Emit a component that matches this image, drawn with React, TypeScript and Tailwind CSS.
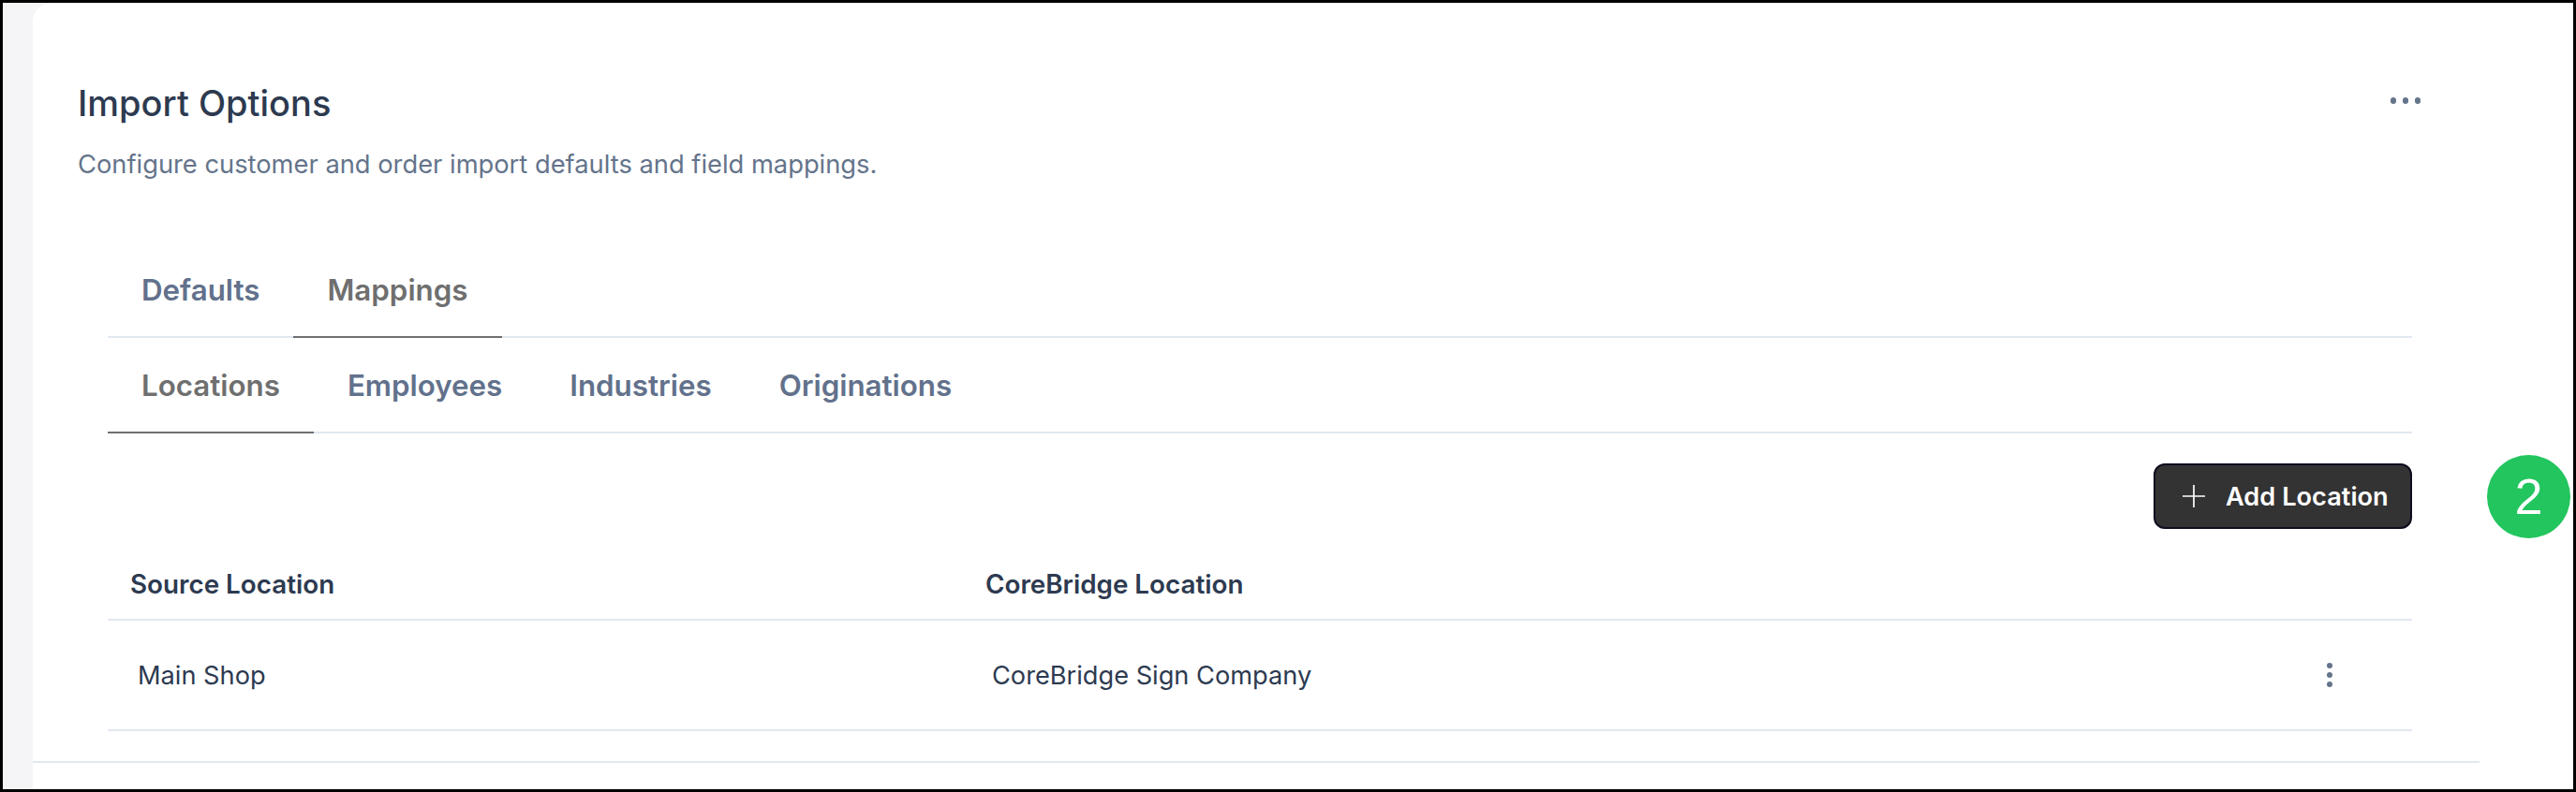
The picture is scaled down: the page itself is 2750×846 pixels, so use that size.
import React from "react";

function Tab({ label, active }: { label: string; active?: boolean }) {
  return (
    <div
      className={
        "h-[102px] -mb-[2px] px-9 pt-[2px] flex items-center text-[31.3px] font-semibold border-b-2 " +
        (active ? "text-[#6f6f6f] border-[#6f6f6f]" : "text-[#62718c] border-transparent")
      }
    >
      {label}
    </div>
  );
}

function Dots({ vertical }: { vertical?: boolean }) {
  return (
    <div className={vertical ? "flex flex-col gap-[3.5px]" : "flex flex-row gap-[6.5px]"}>
      <span className="w-[6.5px] h-[6.5px] rounded-full bg-[#64748b]" />
      <span className="w-[6.5px] h-[6.5px] rounded-full bg-[#64748b]" />
      <span className="w-[6.5px] h-[6.5px] rounded-full bg-[#64748b]" />
    </div>
  );
}

export default function App() {
  return (
    <div className="w-[2750px] h-[846px] border-[3px] border-black bg-[#f5f5f7] flex font-['Inter',sans-serif] overflow-hidden">
      <div className="w-[32px] shrink-0" />
      <div className="w-[2612px] shrink-0 h-full rounded-tl-[20px] rounded-tr-[3px] bg-white">
        <div className="h-[812px] border-b-2 border-[#e2e8f0] flex flex-col pl-[49px]">
          <div className="flex items-start justify-between pr-[63px] pt-[84px] -ml-[1px]">
            <div>
              <h1 className="text-[38px] leading-[48px] font-medium text-[#2d3a50] -mt-[1px]">Import Options</h1>
              <p className="text-[27.3px] leading-[40px] text-[#64748b] mt-[22px]">
                Configure customer and order import defaults and field mappings.
              </p>
            </div>
            <div className="mt-[17px]">
              <Dots />
            </div>
          </div>

          <div className="ml-[31px] w-[2460px] mt-[63px]">
            <div className="flex border-b-2 border-[#e2e8f0] h-[102px]">
              <Tab label="Defaults" />
              <Tab label="Mappings" active />
            </div>
            <div className="flex border-b-2 border-[#e2e8f0] h-[102px]">
              <Tab label="Locations" active />
              <Tab label="Employees" />
              <Tab label="Industries" />
              <Tab label="Originations" />
            </div>

            <div className="flex justify-end mt-[32px]">
              <button className="w-[276px] h-[70px] rounded-[12px] bg-[#333333] border-2 border-[#0d0d1f] flex items-center pl-[29px] gap-[22px] text-white text-[27.2px] font-semibold">
                <svg width="24" height="24" viewBox="0 0 24 24" fill="none" stroke="white" strokeWidth="1.7">
                  <path d="M12 0V24M0 12H24" />
                </svg>
                <span className="pt-[2px]">Add Location</span>
              </button>
            </div>

            <div className="flex items-center h-[98px] pt-[24px] border-b-2 border-[#e2e8f0] text-[27.8px] font-semibold text-[#2d3a50]">
              <div className="w-[937px] pl-[24px]">Source Location</div>
              <div>CoreBridge Location</div>
            </div>
            <div className="flex items-center h-[118px] pt-[2px] border-b-2 border-[#e2e8f0] text-[27.2px] text-[#2d3a50]">
              <div className="w-[937px] pl-[32px]">Main Shop</div>
              <div className="pl-[7px] flex-1">CoreBridge Sign Company</div>
              <div className="mr-[85px] -mt-[2px]">
                <Dots vertical />
              </div>
            </div>
          </div>
        </div>
      </div>

      <div className="flex-1 bg-white relative">
        <div className="absolute left-[8px] top-[483px] w-[89px] h-[89px] rounded-full bg-[#22c55e] flex items-center justify-center text-white text-[54px] font-['Liberation_Sans',sans-serif]">
          2
        </div>
      </div>
    </div>
  );
}
